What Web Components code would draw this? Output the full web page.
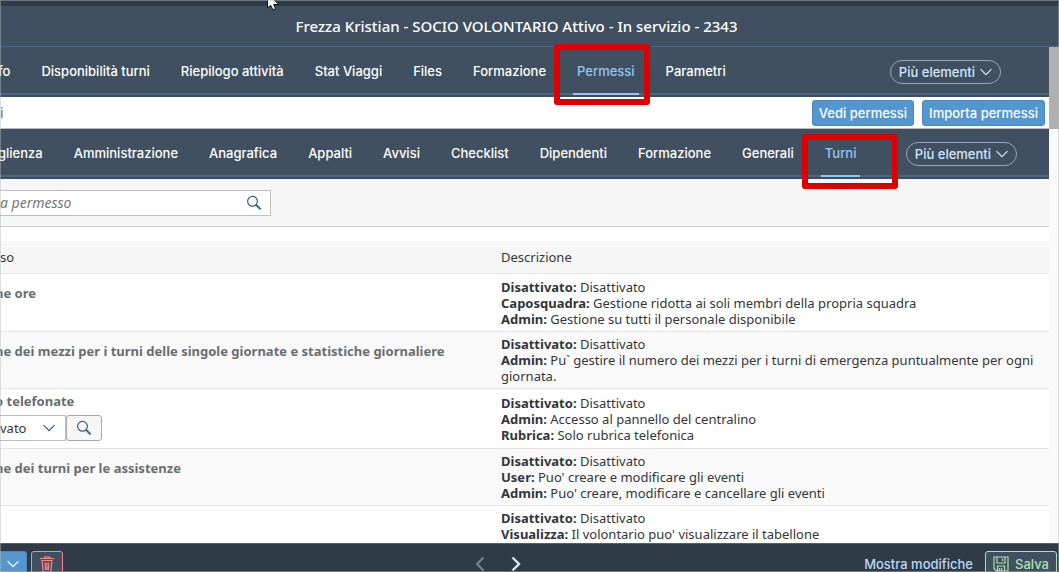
<!DOCTYPE html>
<html lang="it">
<head>
<meta charset="utf-8">
<title>Permessi volontario</title>
<style>
  html, body { margin: 0; height: 100%; }
  body { overflow: hidden; font: 13px/16px "Noto Sans", sans-serif; color: #32363a; background: #fff; }
</style>
</head>
<body>
<permessi-page></permessi-page>
<script>
const NAV_FONT = 'font: 500 13px/16px Inter, "Noto Sans", sans-serif;';
const ICONS = {
  down: '<svg viewBox="0 0 12 8" width="12" height="8"><path d="M.5 1.2 6 6.7l5.5-5.5" fill="none" stroke="currentColor" stroke-width="1.2"/></svg>',
  search: '<svg viewBox="0 0 16 16" width="16" height="16"><circle cx="6.5" cy="6.3" r="4.9" fill="none" stroke="currentColor" stroke-width="1.2"/><path d="m10 9.8 4.6 4.6" stroke="currentColor" stroke-width="2"/></svg>',
  trash: '<svg viewBox="0 0 16 17" width="16" height="17" fill="none" stroke="currentColor" stroke-width="1.2"><path d="M5.5 2V1h5v1M1 2.5h14M2.500 4.500h11M3 4.500l1.200 11.500h7.600L13 4.500M6 6.500l.6 7.500M8 6.500V14M10 6.500 9.400 14"/></svg>',
  save: '<svg viewBox="0 0 16 16" width="16" height="16" fill="none" stroke="currentColor" stroke-width="1.2"><path d="M1 1h14v14H3.500L1 12.500zM4 1v6h8V1M4.500 15v-5h7v5M9.500 2.500V5M6.500 12v3M8.500 12v3"/></svg>',
  prev: '<svg viewBox="0 0 10 16" width="10" height="16"><path d="M8.500 1.500 2 8l6.500 6.500" fill="none" stroke="currentColor" stroke-width="2"/></svg>',
  next: '<svg viewBox="0 0 10 16" width="10" height="16"><path d="M1.500 1.500 8 8l-6.500 6.500" fill="none" stroke="currentColor" stroke-width="2.4"/></svg>',
  cursor: '<svg viewBox="0 0 13 11" width="13" height="11"><path d="M.5-6V8l3.200-2.700L6 9.800l2.600-1.200L6.600 4.500H12z" fill="#fff" stroke="#111" stroke-width="1"/></svg>'
};

class BaseElement extends HTMLElement {
  connectedCallback() {
    if (this.shadowRoot) return;
    const t = document.createElement('template');
    t.innerHTML = this.render();
    this.attachShadow({ mode: 'open' }).append(t.content.cloneNode(true));
  }
}

customElements.define('ui-icon', class extends BaseElement {
  render() {
    return `<style>:host{display:inline-flex}svg{display:block}</style>${ICONS[this.getAttribute('name')]}`;
  }
});

customElements.define('page-title', class extends BaseElement {
  render() {
    return `<style>
      :host{display:block;flex:none;background:#405060;border-top:6px solid #2f3b47;border-bottom:1px solid #4d6a80}
      h1{margin:0;padding:10px 26px 10px 0;text-align:center;font:500 15px/20px "Noto Sans",sans-serif;color:#fff}
    </style><h1><slot></slot></h1>`;
  }
});

customElements.define('nav-bar', class extends BaseElement {
  render() {
    return `<style>
      :host{display:block;background:#405060;box-shadow:inset 0 -2px #3d4d5f,inset 0 -4px #4f6680}
      nav{display:flex;align-items:center;gap:31px;height:50px;margin-left:-2px;padding-right:var(--end)}
      button{${NAV_FONT}margin-left:auto;display:flex;align-items:center;gap:5px;height:24px;padding:0 8px;color:#d1e8ff;background:none;border:1px solid #94a6b8;border-radius:12px;white-space:nowrap}
    </style><nav><slot></slot><button type="button">Più elementi <ui-icon name="down"></ui-icon></button></nav>`;
  }
});

customElements.define('nav-tab', class extends BaseElement {
  render() {
    return `<style>
      :host{display:block;position:relative;height:50px;white-space:nowrap}
      a{${NAV_FONT}display:block;padding:16px 0 18px;color:#fff;text-decoration:none}
      :host([active]) a{color:#91c8f6}
      :host([active])::after{content:"";position:absolute;left:-4px;right:-4px;bottom:2px;height:2px;background:#91c8f6}
      :host([marked])::before{content:"";position:absolute;z-index:2;left:-23px;top:var(--mark-top,-3px);width:84px;height:var(--mark-height,49px);border:6px solid #dc0000;border-radius:3px}
    </style><a href="#"><slot></slot></a>`;
  }
});

customElements.define('action-bar', class extends BaseElement {
  render() {
    return `<style>
      :host{display:flex;align-items:center;gap:8px;height:31px;padding-right:4px;border-bottom:1px solid #b8bcc0;background:#fff}
      h2{margin:0;margin-right:auto;font-weight:400;font-size:14px;line-height:16px;color:#6a6d70}
      button{${NAV_FONT}height:26px;padding:0 6px;color:#fff;background:#5496cd;border:1px solid #4789c3;border-radius:3px}
    </style><h2>i</h2><button type="button">Vedi permessi</button><button type="button">Importa permessi</button>`;
  }
});

customElements.define('search-bar', class extends BaseElement {
  render() {
    return `<style>
      :host{display:block;padding:11px 0 10px;background:#f7f7f7;border-bottom:1px solid #ccc}
      label{display:flex;align-items:center;width:272px;height:26px;margin-left:-1px;padding-right:8px;box-sizing:border-box;background:#fff;border:1px solid #bfbfbf;color:#346187}
      input{flex:1;min-width:0;border:0;padding:0;outline:0;background:none;font:italic 14px/18px "Noto Sans",sans-serif}
      input::placeholder{color:#74777a;opacity:1}
    </style><label><input type="text" placeholder="a permesso" aria-label="Cerca permesso"><ui-icon name="search"></ui-icon></label>`;
  }
});

customElements.define('level-picker', class extends BaseElement {
  render() {
    return `<style>
      :host{display:flex;margin-top:6px}
      div{display:grid;align-items:center;width:66px;height:26px;box-sizing:border-box;border:1px solid #bfbfbf;border-left:0;background:#fff}
      select,div ui-icon{grid-area:1/1}
      select{appearance:none;width:100%;border:0;padding:0;background:none;font:13px/16px "Noto Sans",sans-serif;color:#32363a}
      ui-icon{color:#346187}
      div ui-icon{justify-self:end;margin-right:10px;pointer-events:none}
      button{display:flex;align-items:center;justify-content:center;width:36px;height:26px;padding:0;background:#f7f7f7;border:1px solid #aaa;border-radius:3px}
    </style><div><select aria-label="Livello"><option>vato</option></select><ui-icon name="down"></ui-icon></div>
    <button type="button" aria-label="Cerca"><ui-icon name="search"></ui-icon></button>`;
  }
});

const ROWS = [
  ['ne ore', 58, [['Disattivato:', 'Disattivato'], ['Caposquadra:', 'Gestione ridotta ai soli membri della propria squadra'], ['Admin:', 'Gestione su tutti il personale disponibile']]],
  ['ne dei mezzi per i turni delle singole giornate e statistiche giornaliere', 57, [['Disattivato:', 'Disattivato'], ['Admin:', 'Pu` gestire il numero dei mezzi per i turni di emergenza puntualmente per ogni giornata.']]],
  ['o telefonate', 60, [['Disattivato:', 'Disattivato'], ['Admin:', 'Accesso al pannello del centralino'], ['Rubrica:', 'Solo rubrica telefonica']], true],
  ['ne dei turni per le assistenze', 57, [['Disattivato:', 'Disattivato'], ['User:', "Puo' creare e modificare gli eventi"], ['Admin:', "Puo' creare, modificare e cancellare gli eventi"]]],
  ['', 41, [['Disattivato:', 'Disattivato'], ['Visualizza:', "Il volontario puo' visualizzare il tabellone"]]]
];

customElements.define('permission-table', class extends BaseElement {
  render() {
    const rows = ROWS.map(([label, height, levels, picker]) => `<tr style="height:${height}px">
      <td class="name${picker ? ' tight' : ''}"><strong>${label}</strong>${picker ? '<level-picker></level-picker>' : ''}</td>
      <td>${levels.map(([k, v]) => `<div><b>${k}</b> ${v}</div>`).join('')}</td></tr>`).join('');
    return `<style>
      :host{display:block;margin-top:14px}
      table{width:100%;table-layout:fixed;border-collapse:separate;border-spacing:0}
      th,td{box-sizing:border-box;padding:4px 8px;text-align:left;vertical-align:middle;border-bottom:1px solid #e5e5e5}
      th{height:33px;padding:8px;font-weight:400;background:#f7f7f7}
      th:first-child{width:47%;padding-left:0}
      tbody tr:nth-child(even){background:#fafafa}
      .name{padding:11px 0 4px;vertical-align:top;color:#6a6d70}
      .tight{padding-top:4px}
      strong{display:block;margin-left:-5px;white-space:nowrap}
    </style><table><thead><tr><th scope="col">so</th><th scope="col">Descrizione</th></tr></thead><tbody>${rows}</tbody></table>`;
  }
});

customElements.define('bottom-bar', class extends BaseElement {
  render() {
    return `<style>
      :host{position:relative;z-index:3;display:grid;grid-template-columns:1fr auto 1fr;align-items:start;flex:none;height:29px;overflow:hidden;background:#2f3b47;border-top:1px solid #54616d;padding-right:2px;box-sizing:border-box}
      div{display:flex;gap:4px;padding-top:7px}
      button{${NAV_FONT}box-sizing:border-box;height:26px;padding:0;display:flex;align-items:center;justify-content:center;gap:6px;border:1px solid;border-radius:3px}
      .more{width:27px;color:#fff;background:#5496cd;border-color:#4789c3;border-left:0;border-radius:0 3px 3px 0}
      .del{width:32px;color:#ff8888;background:#405060}
      .arrows{gap:26px;margin-right:62px;padding-top:12px}
      .arrows button{height:16px;border:0;background:none;color:#d1e8ff}
      .arrows button[disabled]{color:#76879a}
      .end{justify-content:flex-end;gap:12px}
      .show{border:0;background:none;color:#b8d9f8}
      .save{width:72px;color:#abe2ab;background:#405060}
    </style>
    <div><button class="more" type="button" aria-label="Altre azioni"><ui-icon name="down"></ui-icon></button><button class="del" type="button" aria-label="Elimina"><ui-icon name="trash"></ui-icon></button></div>
    <div class="arrows"><button type="button" aria-label="Precedente" disabled><ui-icon name="prev"></ui-icon></button><button type="button" aria-label="Successivo"><ui-icon name="next"></ui-icon></button></div>
    <div class="end"><button class="show" type="button">Mostra modifiche</button><button class="save" type="button"><ui-icon name="save"></ui-icon>Salva</button></div>`;
  }
});

customElements.define('permessi-page', class extends BaseElement {
  render() {
    const tab = t => `<nav-tab>${t}</nav-tab>`;
    return `<style>
      :host{display:flex;flex-direction:column;height:100vh;position:relative;overflow:hidden}
      :host::after{content:"";position:absolute;inset:0;border:1px solid rgba(176,188,188,.45);pointer-events:none;z-index:5}
      .body{flex:1;min-height:0;display:flex}
      main{flex:1;min-width:0}
      .scroll{width:10px;background:#fafafa}
      .thumb{height:82px;background:#b0b0b0}
      .pointer{position:absolute;left:267px;top:0;z-index:4}
      .first{--end:48px}
      .second{--end:32px}
      .second nav-tab{--mark-top:5px;--mark-height:43px}
    </style>
    <page-title>Frezza Kristian - SOCIO VOLONTARIO Attivo - In servizio - 2343</page-title>
    <div class="body"><main>
      <nav-bar class="first">${['fo', 'Disponibilità turni', 'Riepilogo attività', 'Stat Viaggi', 'Files', 'Formazione'].map(tab).join('')}<nav-tab active marked>Permessi</nav-tab>${tab('Parametri')}</nav-bar>
      <action-bar></action-bar>
      <nav-bar class="second">${['glienza', 'Amministrazione', 'Anagrafica', 'Appalti', 'Avvisi', 'Checklist', 'Dipendenti', 'Formazione', 'Generali'].map(tab).join('')}<nav-tab active marked>Turni</nav-tab></nav-bar>
      <search-bar></search-bar>
      <permission-table></permission-table>
    </main><div class="scroll"><div class="thumb"></div></div></div>
    <bottom-bar></bottom-bar>
    <ui-icon class="pointer" name="cursor"></ui-icon>`;
  }
});
</script>
</body>
</html>
